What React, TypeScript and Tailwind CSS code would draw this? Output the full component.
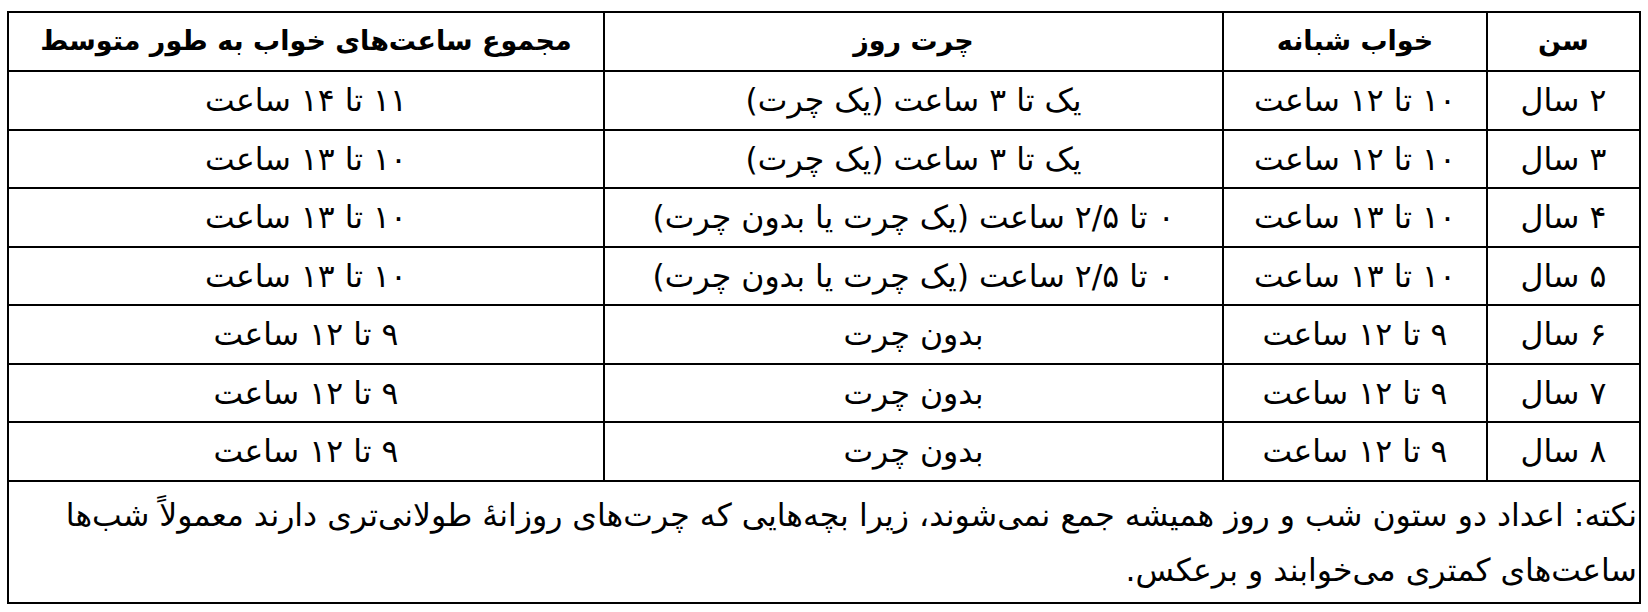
import React from 'react';

const rows = [
  { age: '۲ سال', night: '۱۰ تا ۱۲ ساعت', nap: 'یک تا ۳ ساعت (یک چرت)', total: '۱۱ تا ۱۴ ساعت' },
  { age: '۳ سال', night: '۱۰ تا ۱۲ ساعت', nap: 'یک تا ۳ ساعت (یک چرت)', total: '۱۰ تا ۱۳ ساعت' },
  { age: '۴ سال', night: '۱۰ تا ۱۳ ساعت', nap: '۰ تا ۲/۵ ساعت (یک چرت یا بدون چرت)', total: '۱۰ تا ۱۳ ساعت' },
  { age: '۵ سال', night: '۱۰ تا ۱۳ ساعت', nap: '۰ تا ۲/۵ ساعت (یک چرت یا بدون چرت)', total: '۱۰ تا ۱۳ ساعت' },
  { age: '۶ سال', night: '۹ تا ۱۲ ساعت', nap: 'بدون چرت', total: '۹ تا ۱۲ ساعت' },
  { age: '۷ سال', night: '۹ تا ۱۲ ساعت', nap: 'بدون چرت', total: '۹ تا ۱۲ ساعت' },
  { age: '۸ سال', night: '۹ تا ۱۲ ساعت', nap: 'بدون چرت', total: '۹ تا ۱۲ ساعت' },
];

export default function App() {
  return (
    <div className="bg-white w-[1648px] h-[612px] pt-[11px] pl-[7px] font-['DejaVu_Sans',sans-serif] text-black">
      <table dir="rtl" className="w-[1632px] table-fixed border-collapse border-2 border-black text-[31.5px]">
        <colgroup>
          <col className="w-[153px]" />
          <col className="w-[264px]" />
          <col className="w-[619px]" />
          <col className="w-[596px]" />
        </colgroup>
        <thead>
          <tr className="h-[59px] font-bold text-[27px]">
            <th className="border-2 border-black text-center">سن</th>
            <th className="border-2 border-black text-center">خواب شبانه</th>
            <th className="border-2 border-black text-center">چرت روز</th>
            <th className="border-2 border-black text-center">مجموع ساعت‌های خواب به طور متوسط</th>
          </tr>
        </thead>
        <tbody>
          {rows.map((r) => (
            <tr key={r.age} className="h-[58.5px] leading-[40px]">
              <td className="border-2 border-black text-center">{r.age}</td>
              <td className="border-2 border-black text-center">{r.night}</td>
              <td className="border-2 border-black text-center">{r.nap}</td>
              <td className="border-2 border-black text-center">{r.total}</td>
            </tr>
          ))}
          <tr>
            <td colSpan={4} className="border-2 border-black text-right px-[2px] pt-[6px] pb-[4px] leading-[55px]">
              نکته: اعداد دو ستون شب و روز همیشه جمع نمی‌شوند، زیرا بچه‌هایی که چرت‌های روزانهٔ طولانی‌تری دارند معمولاً شب‌ها
              <br />
              ساعت‌های کمتری می‌خوابند و برعکس.
            </td>
          </tr>
        </tbody>
      </table>
    </div>
  );
}
